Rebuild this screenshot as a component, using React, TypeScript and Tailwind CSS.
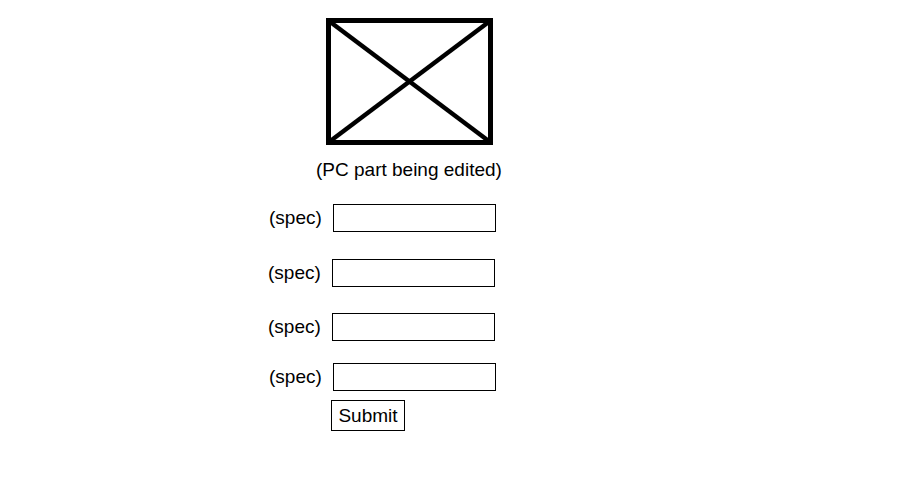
export default function App() {
  const rows = [
    { shift: "ml-[269px]", gap: "mt-[23px]" },
    { shift: "ml-[268px]", gap: "mt-[27px]" },
    { shift: "ml-[268px]", gap: "mt-[26px]" },
    { shift: "ml-[269px]", gap: "mt-[22px]" },
  ];

  return (
    <div className="min-h-[500px] w-[900px] bg-white font-['Liberation_Sans',Arial,sans-serif] text-[19px] text-black">
      <div className="pt-[18px]">
        {/* placeholder image of the part */}
        <svg className="ml-[326px] block" width="167" height="127" viewBox="0 0 167 127">
          <line x1="3" y1="3" x2="164" y2="124" stroke="black" strokeWidth="4.5" />
          <line x1="164" y1="3" x2="3" y2="124" stroke="black" strokeWidth="4.5" />
          <rect x="2.5" y="2.5" width="162" height="122" fill="none" stroke="black" strokeWidth="5" />
        </svg>
        <p className="ml-[316px] mt-[14px] leading-[22px]">(PC part being edited)</p>

        <form onSubmit={(e) => e.preventDefault()}>
          {rows.map((row, i) => (
            <div key={i} className={`flex items-center ${row.shift} ${row.gap}`}>
              <label className="w-[54px] leading-[22px]">(spec)</label>
              <input type="text" className="ml-[10px] h-[28px] w-[163px] border border-black bg-white outline-none" />
            </div>
          ))}
          <button
            type="submit"
            className="ml-[331px] mt-[9px] block h-[31px] w-[74px] border border-black bg-white leading-[22px]"
          >
            Submit
          </button>
        </form>
      </div>
    </div>
  );
}
